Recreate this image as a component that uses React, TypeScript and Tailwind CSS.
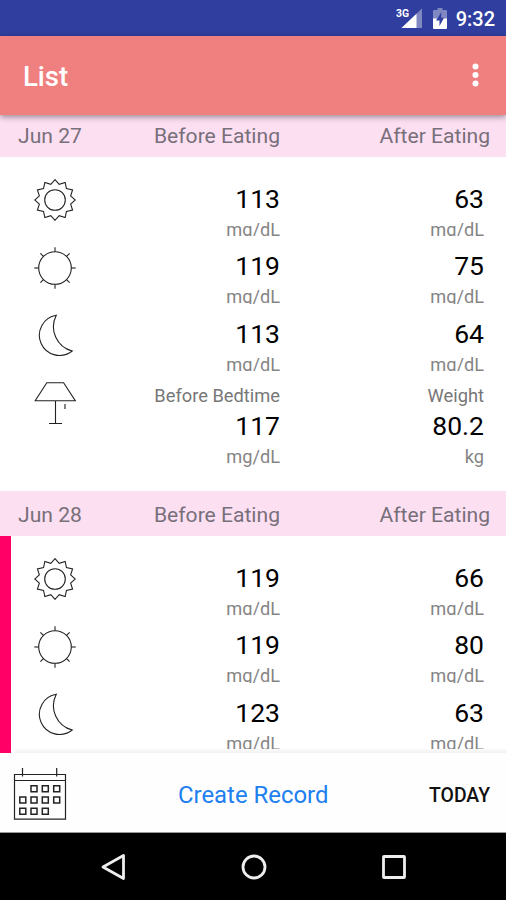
import React from 'react';

interface Reading {
  icon: React.ReactElement;
  before: string;
  after: string;
}

interface Day {
  date: string;
  current: boolean;
  readings: Reading[];
  bedtime?: string;
  weight?: string;
}

const iconProps = {
  width: 42,
  height: 42,
  viewBox: '0 0 42 42',
  fill: 'none',
  stroke: '#222',
  strokeWidth: 1.1,
};

// 12 spikes, so 24 alternating outer / inner points
const spikes = Array.from({ length: 24 }, (_, i) => {
  const r = i % 2 === 0 ? 20.3 : 16.2;
  const a = (i * Math.PI) / 12;
  return `${(21 + r * Math.sin(a)).toFixed(2)},${(21 - r * Math.cos(a)).toFixed(2)}`;
}).join(' ');

const MorningIcon = () => (
  <svg {...iconProps}>
    <polygon points={spikes} />
    <circle cx="21" cy="21" r="10.3" />
  </svg>
);

const NoonIcon = () => (
  <svg {...iconProps}>
    <circle cx="21" cy="21" r="16.3" />
    {[0, 45, 90, 135, 180, 225, 270, 315].map((angle) => (
      <path key={angle} d="M21 4.7V0.3" transform={`rotate(${angle} 21 21)`} />
    ))}
  </svg>
);

const MoonIcon = () => (
  <svg {...iconProps}>
    <path d="M22.3 1.3A20.2 20.2 0 1 0 38.2 37A25 25 0 0 1 22.3 1.3Z" />
  </svg>
);

const LampIcon = () => (
  <svg {...iconProps}>
    <path d="M12.8 0.7H29.6L41.3 18.7H1.2ZM21.5 18.7V41.5M15 41.5H28M31 22V27" />
  </svg>
);

const CalendarIcon = () => (
  <svg width="54" height="54" viewBox="0 0 54 54" fill="none" stroke="#222" strokeWidth="1.2">
    <path d="M1.5 8.5H52.5V53.2H1.5ZM1.5 14.5H52.5M9.5 2V10.5M43.7 2V10.5" />
    <path
      strokeWidth="1.5"
      d="M18 19.7h6v6h-6zM29.3 19.7h6v6h-6zM40.7 19.7h6v6h-6zM6.8 31h6v6h-6zM18 31h6v6h-6zM29.3 31h6v6h-6zM40.7 31h6v6h-6zM6.8 42.2h6v6h-6zM18 42.2h6v6h-6zM29.3 42.2h6v6h-6z"
    />
  </svg>
);

const days: Day[] = [
  {
    date: 'Jun 27',
    current: false,
    readings: [
      { icon: <MorningIcon />, before: '113', after: '63' },
      { icon: <NoonIcon />, before: '119', after: '75' },
      { icon: <MoonIcon />, before: '113', after: '64' },
    ],
    bedtime: '117',
    weight: '80.2',
  },
  {
    date: 'Jun 28',
    current: true,
    readings: [
      { icon: <MorningIcon />, before: '119', after: '66' },
      { icon: <NoonIcon />, before: '119', after: '80' },
      { icon: <MoonIcon />, before: '123', after: '63' },
    ],
  },
];

const Value: React.FC<{ value: string; unit: string; label?: string }> = ({ value, unit, label }) => (
  <div className="flex flex-col items-end whitespace-nowrap pt-[11px]">
    {label && <span className="text-[18.3px] leading-[25px] text-[#777]">{label}</span>}
    <span className="mb-0.5 text-[26.5px] leading-[35px] text-black">{value}</span>
    <span className="text-[18.2px] leading-6 text-[#858585]">{unit}</span>
  </div>
);

const DaySection: React.FC<{ day: Day }> = ({ day }) => (
  <section>
    <div className="flex h-[45.5px] items-center bg-[#fddff2] pl-[18px] pr-4 pt-[2.5px] text-[21.1px] text-[#77707a]">
      <span className="w-[102px]">{day.date}</span>
      <span className="w-40 text-right">Before Eating</span>
      <span className="flex-1 text-right">After Eating</span>
    </div>
    <div className="flex h-[333.5px]">
      <div className={day.current ? 'w-[11px] bg-[#ff0066]' : 'w-[11px]'} />
      <div className="flex-1 pr-[22px] pt-[12.5px]">
        {day.readings.map((reading, index) => (
          <div key={index} className="mb-px grid h-[66.5px] grid-cols-[88px_181px_1fr] overflow-hidden">
            <div className="pl-[23px] pt-[9.5px]">{reading.icon}</div>
            <Value value={reading.before} unit="mg/dL" />
            <Value value={reading.after} unit="mg/dL" />
          </div>
        ))}
        {day.bedtime && day.weight && (
          <div className="grid grid-cols-[88px_181px_1fr]">
            <div className="pl-[23px] pt-[9.5px]">
              <LampIcon />
            </div>
            <Value label="Before Bedtime" value={day.bedtime} unit="mg/dL" />
            <Value label="Weight" value={day.weight} unit="kg" />
          </div>
        )}
      </div>
    </div>
  </section>
);

const App: React.FC = (): React.ReactElement => {
  return (
    <div className="flex h-[900px] w-[506px] flex-col overflow-hidden bg-white font-[Roboto,sans-serif]">
      {/* Status bar */}
      <div className="flex h-9 shrink-0 items-center justify-end bg-[#303f9f] pr-[11px] text-white">
        <svg width="27" height="24" viewBox="0 0 27 24" className="mr-[10px]">
          <text x="0" y="11" fontSize="11" fontWeight="700" fill="#fff" textLength="13" lengthAdjust="spacingAndGlyphs">
            3G
          </text>
          <path d="M26 2.5V22H5.5Z" fill="#8088c2" />
          <path d="M20.5 7.7V22H5.5Z" fill="#fff" />
        </svg>
        <svg width="14" height="21" viewBox="0 0 14 21" className="mr-[9px]">
          <path d="M4.5 0h5v2H13a1 1 0 0 1 1 1v8H0V3a1 1 0 0 1 1-1h3.5z" fill="#8088c2" />
          <path d="M0 10.5h14V20a1 1 0 0 1-1 1H1a1 1 0 0 1-1-1z" fill="#fff" />
          <path d="M8.5 4L3 12.5h3.5V18L11 9.8H8z" fill="#303f9f" />
        </svg>
        <span className="pt-0.5 text-[20px] font-medium leading-none">9:32</span>
      </div>

      {/* App bar */}
      <header className="relative z-10 flex h-[78.5px] shrink-0 items-center justify-between bg-[#f08080] pl-[23px] pr-[27px] text-white shadow-[0_2px_6px_rgba(0,0,0,0.4)]">
        <h1 className="pt-0.5 text-[27.5px] font-medium leading-none">List</h1>
        <svg width="7" height="24" viewBox="0 0 7 24" fill="#fff">
          <circle cx="3.5" cy="3.6" r="3" />
          <circle cx="3.5" cy="12" r="3" />
          <circle cx="3.5" cy="20.4" r="3" />
        </svg>
      </header>

      {/* Records, scrolled slightly under the app bar */}
      <main className="relative min-h-0 flex-1 overflow-hidden">
        <div className="-mt-[3px]">
          {days.map((day) => (
            <DaySection key={day.date} day={day} />
          ))}
        </div>
        <div className="absolute bottom-0 left-[15px] right-0 h-[4px] bg-gradient-to-b from-[#fafafa] to-[#f2f2f2]" />
      </main>

      {/* Actions */}
      <footer className="flex h-20 shrink-0 items-center border-b border-[#999] bg-[#fefefe] pl-[13px] pr-4">
        <div className="w-[54px]">
          <CalendarIcon />
        </div>
        <button className="ml-[111px] whitespace-nowrap pt-[7px] text-[23.9px] text-[#2080f0]">Create Record</button>
        <button className="ml-auto pt-1.5 text-[19.4px] font-medium text-[#111]">TODAY</button>
      </footer>

      {/* Navigation bar */}
      <nav className="flex h-[67px] shrink-0 items-center justify-between bg-black pl-[100px] pr-[98px]">
        <svg width="27" height="28" viewBox="0 0 27 28" fill="none" stroke="#eee" strokeWidth="2.8" strokeLinejoin="round">
          <path d="M23.5 2.5V25.5L3 14Z" />
        </svg>
        <svg width="28" height="28" viewBox="0 0 28 28" fill="none" stroke="#eee" strokeWidth="2.8">
          <circle cx="14" cy="14" r="11" />
        </svg>
        <svg width="28" height="28" viewBox="0 0 28 28" fill="none" stroke="#eee" strokeWidth="2.8" strokeLinejoin="round">
          <rect x="3.5" y="3.5" width="21" height="21" rx="0.5" />
        </svg>
      </nav>
    </div>
  );
};

export default App;
